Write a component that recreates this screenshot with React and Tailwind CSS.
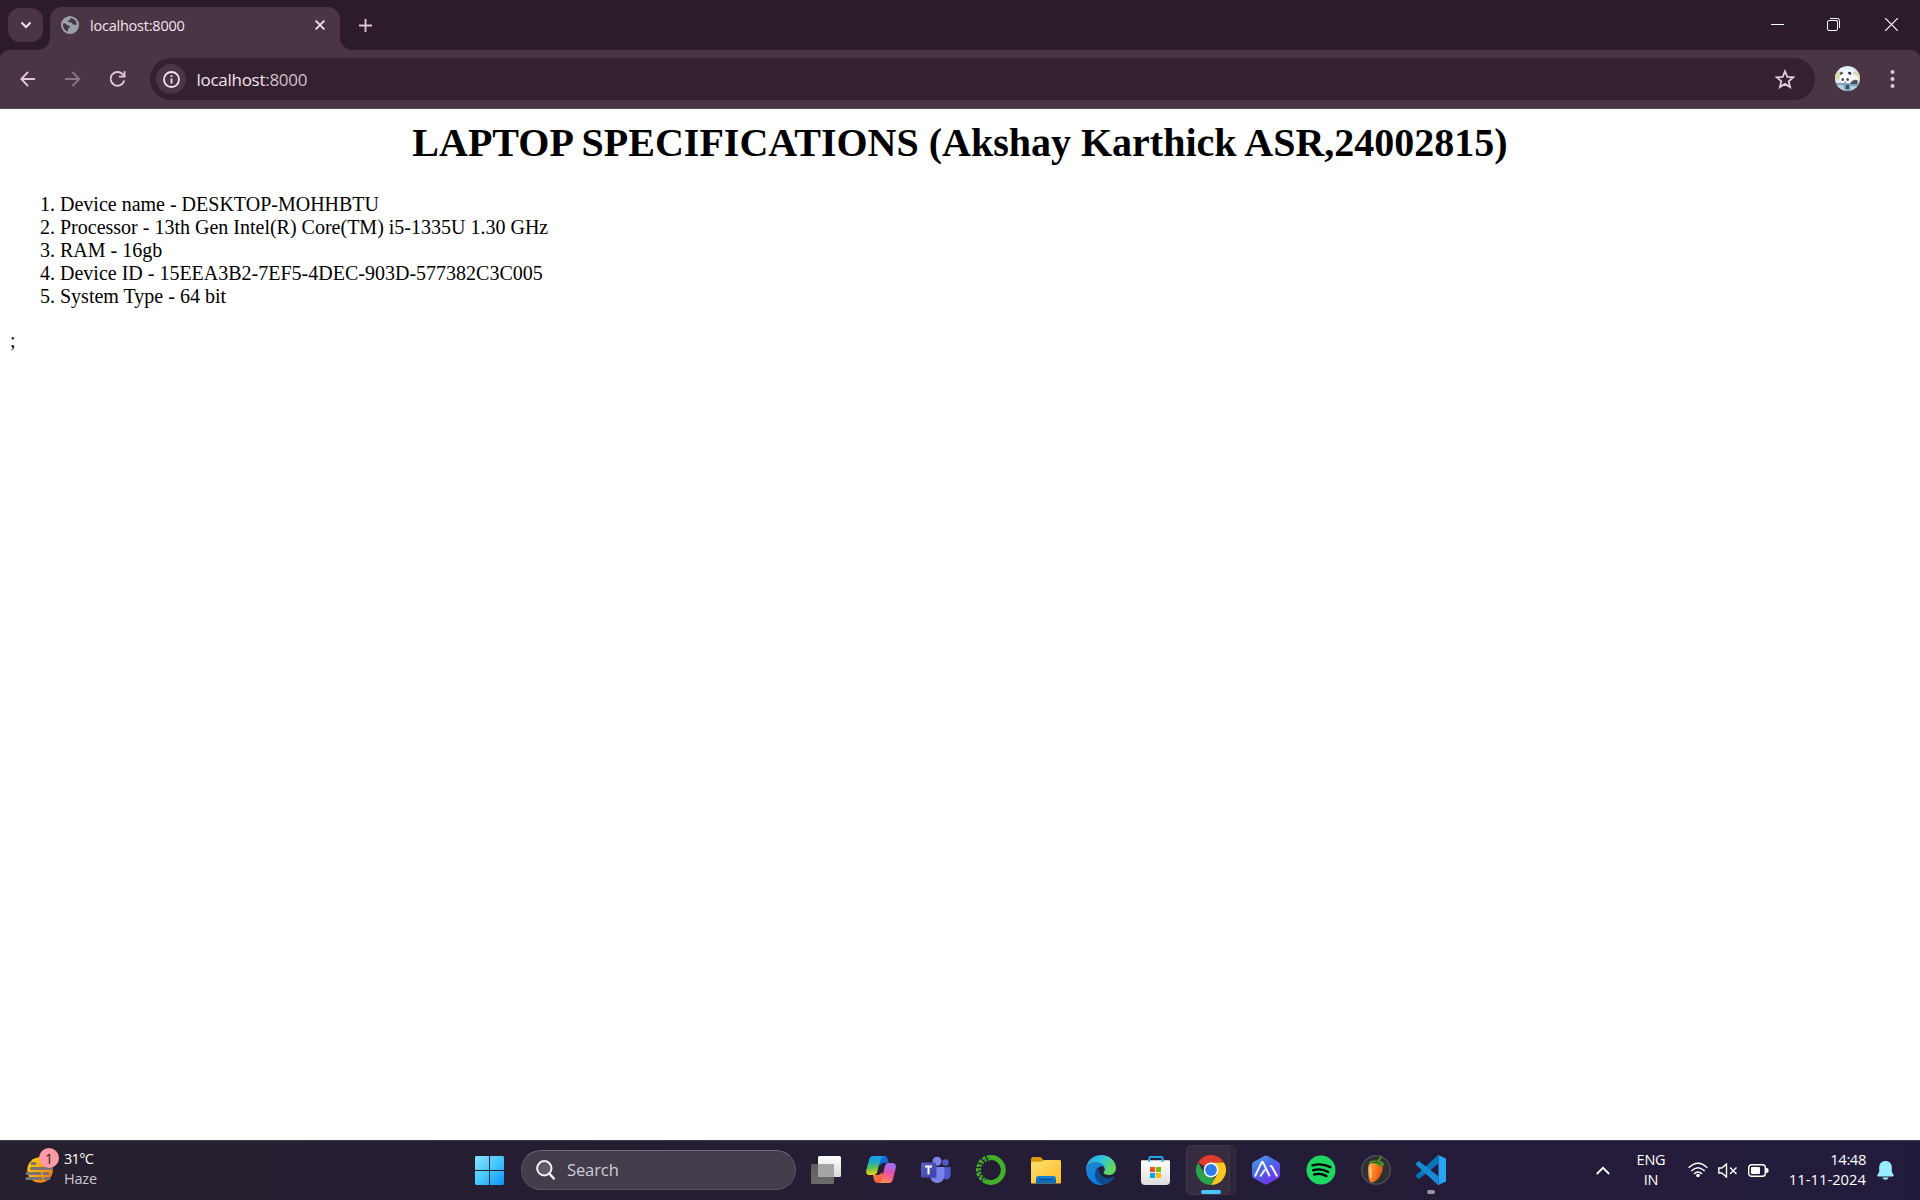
import React from "react";

const ui = "font-['Open_Sans','Noto_Sans',sans-serif]";

function Globe() {
  return (
    <svg width="18" height="18" viewBox="0 0 18 18">
      <circle cx="9" cy="9" r="8.8" fill="#9aa0a6" />
      <path d="M1.8 7.2C4 7 5 7.6 5.6 8.8c.7 1.2 2.4.6 3 1.5.5 1-.1 1.6-1 2-.8.4-.6 1.500-.7 3.600C4 15.300 1.900 12.500 1.800 9zM9.700 1.900c-.3 1-.1 1.500-1.100 2-.9.500-1.700.6-1.500 1.700.2 1 1.700.8 2.700.9 1.500.2 1.400 1.800 2.600 2.200 1.200.3 2.200-.1 3.700-.2C16 5 13.500 2.300 9.700 1.900z" fill="#4a3545" />
      <circle cx="9" cy="9" r="8" fill="none" stroke="#9aa0a6" strokeWidth="1.7" />
    </svg>
  );
}

function TabStrip() {
  return (
    <div className="flex h-[50px] bg-[#2c1b29]">
      <button className="ml-2 mt-2 flex h-[34px] w-[35px] items-center justify-center rounded-[12px] bg-[#4a3545]">
        <svg width="12" height="8" viewBox="0 0 12 8" fill="none" stroke="#f3e3ef" strokeWidth="2"><path d="M1.500 1.500 6 6l4.500-4.500" /></svg>
      </button>
      <div className="flex w-[7px] flex-col justify-end">
        <svg className="-ml-[6px] w-[13px]" width="13" height="13" viewBox="0 0 13 13"><path d="M13 0A13 13 0 0 1 0 13h13z" fill="#4a3545" /></svg>
      </div>
      <div className="mt-[7px] flex h-[43px] w-[290px] items-center rounded-t-[12px] bg-[#4a3545] pb-[7px] pl-[11px] pr-[15px]">
        <Globe />
        <span className="ml-[11px] flex-1 pt-[2px] text-[14.5px] leading-5 tracking-[-0.22px] text-[#f3e3ef]">localhost:8000</span>
        <svg width="10" height="10" viewBox="0 0 10 10" stroke="#f3e3ef" strokeWidth="1.800"><path d="m.6.6 8.800 8.800M9.400.6.6 9.400" /></svg>
      </div>
      <div className="flex w-[19px] flex-col justify-end">
        <svg width="13" height="13" viewBox="0 0 13 13"><path d="M0 0A13 13 0 0 0 13 13H0z" fill="#4a3545" /></svg>
      </div>
      <svg className="mt-[19px]" width="13" height="13" viewBox="0 0 13 13" stroke="#e3c6dc" strokeWidth="1.800"><path d="M6.500 0v13M0 6.500h13" /></svg>
      <div className="flex-1" />
      <div className="mr-[22px] flex h-[49px] items-center gap-[43px]">
        <svg width="13" height="14" viewBox="0 0 13 14"><path d="M0 7h13v1H0z" transform="translate(0 -1)" fill="#fff" /></svg>
        <svg width="13" height="13" viewBox="0 0 13 13" fill="none" stroke="#fff"><path d="M3 .5h7.500a2 2 0 0 1 2 2V10" /><path d="M3 2.500h7.500V10" stroke="#9a8d98" /><rect x=".5" y="2.500" width="10" height="10" rx="1.500" /></svg>
        <svg className="ml-[2px]" width="13" height="13" viewBox="0 0 13 13" stroke="#fff" strokeWidth="1.200"><path d="m0 0 13 13M13 0 0 13" /></svg>
      </div>
    </div>
  );
}

function Panda() {
  return (
    <svg width="25" height="25" viewBox="0 0 25 25">
      <defs><clipPath id="av"><circle cx="12.500" cy="12.500" r="12.500" /></clipPath></defs>
      <g clipPath="url(#av)">
        <path d="M0 0h25v25H0z" fill="#dcecf3" />
        <path d="M0 6h8l-3 7H0zM18 5h7v9h-6z" fill="#dcdba8" />
        <path d="M3 2c4-1 9 2 13 1l4 3-9 2z" fill="#f1f8fb" />
        <path d="M0 17h25v8H0z" fill="#7fa3ba" />
        <path d="M0 19h8l2 6H2zM15 20h10l-3 4h-6z" fill="#b5d3e0" />
        <ellipse cx="17" cy="13" rx="6.500" ry="5" fill="#f3f4f6" />
        <path d="M16 16q4-4 7-1l-1 3h-7z" fill="#4b5363" />
        <circle cx="6.500" cy="7.500" r="1.500" fill="#3a3f4d" /><circle cx="14.500" cy="7.500" r="1.700" fill="#2b303e" />
        <ellipse cx="10.500" cy="12" rx="5.800" ry="5" fill="#fbfbfc" />
        <ellipse cx="7.700" cy="13.500" rx="1.200" ry="1.600" fill="#3a3f4d" /><ellipse cx="12.700" cy="13.500" rx="1.200" ry="1.600" fill="#3a3f4d" />
        <path d="M9.500 15.500h1.500v1H9.500zM11 19h3v4h-3z" fill="#3f4a5e" />
      </g>
    </svg>
  );
}

function Toolbar() {
  return (
    <div className="h-[59px] bg-[#2c1b29]">
      <div className="flex h-[59px] items-start rounded-t-[9px] border-b border-[#5d4a58] bg-[#4a3545]">
        <div className="flex h-[58px] w-[150px] items-center pl-5">
          <svg width="16" height="16" viewBox="0 0 16 16" fill="none" stroke="#e3c6dc" strokeWidth="1.800"><path d="M15 8H1.500M8 1 1.200 8 8 15" /></svg>
          <svg className="ml-[29px]" width="16" height="16" viewBox="0 0 16 16" fill="none" stroke="#8b7485" strokeWidth="1.800"><path d="M0 8h14M7.500 1l6.800 7-6.800 7" /></svg>
          <svg className="ml-[29px]" width="16" height="16" viewBox="0 0 16 16" fill="none" stroke="#e3c6dc" strokeWidth="1.900"><path d="M14.200 9.600A6.900 6.900 0 1 1 12.900 3.500L14.400 5" /><path d="M14.500.3v5.300H9" /></svg>
        </div>
        <div className="mt-2 flex h-[42px] w-[1665px] items-center rounded-full bg-[#33212f] pl-[6px] pr-5">
          <div className="flex h-[30px] w-[30px] items-center justify-center rounded-full bg-[#4a3545]">
            <svg width="17" height="17" viewBox="0 0 17 17" fill="none" stroke="#f3e3ef" strokeWidth="1.800"><circle cx="8.500" cy="8.500" r="7.500" /><path d="M8.500 7.500v5M8.500 4.300v1.800" /></svg>
          </div>
          <span className="ml-[10.500px] flex-1 pt-[2px] text-[17px] leading-6 tracking-[-0.28px] text-[#f3e3ef]">localhost<span className="text-[#d3bfce]">:8000</span></span>
          <svg width="20" height="20" viewBox="0 0 20 20" fill="none" stroke="#e0cddb" strokeWidth="1.800"><path d="m10 2.300 2.300 5.500 5.900.5-4.500 3.900 1.400 5.800-5.100-3.100-5.100 3.100 1.400-5.800-4.500-3.900 5.900-.5z" /></svg>
        </div>
        <div className="ml-[20px] mt-[16px]"><Panda /></div>
        <svg className="ml-[30px] mt-5" width="5" height="18" viewBox="0 0 5 18" fill="#e3c6dc"><circle cx="2.500" cy="2" r="2" /><circle cx="2.500" cy="9" r="2" /><circle cx="2.500" cy="16" r="2" /></svg>
      </div>
    </div>
  );
}

const specs = [
  "Device name - DESKTOP-MOHHBTU",
  "Processor - 13th Gen Intel(R) Core(TM) i5-1335U 1.30 GHz",
  "RAM - 16gb",
  "Device ID - 15EEA3B2-7EF5-4DEC-903D-577382C3C005",
  "System Type - 64 bit",
];

function Page() {
  return (
    <main className="flex-1 bg-white px-[10px] pt-[11px] font-['Liberation_Serif',serif] text-[20px] leading-[23px] text-black">
      <h1 className="text-center text-[40px] font-bold leading-[46px]">LAPTOP SPECIFICATIONS (Akshay Karthick ASR,24002815)</h1>
      <ol className="mt-[27px] list-decimal pl-[50px]">
        {specs.map((s) => <li key={s}>{s}</li>)}
      </ol>
      <p className="mt-[21px]">;</p>
    </main>
  );
}

function Icon({ children }) {
  return <svg width="30" height="30" viewBox="0 0 30 30" overflow="visible">{children}</svg>;
}

function Grad({ id, stops, x2 = 1, y2 = 1 }) {
  return (
    <linearGradient id={id} x1="0" y1="0" x2={x2} y2={y2}>
      {stops.map((c, i) => <stop key={i} offset={i / (stops.length - 1)} stopColor={c} />)}
    </linearGradient>
  );
}

const TaskView = () => (
  <Icon>
    <defs><Grad id="tv" x2={0} stops={["#ffffff", "#d8d8d8"]} /><Grad id="tv2" x2={0} stops={["#5d5d5d", "#6b6b6b"]} /></defs>
    <rect x="0" y="9" width="23" height="20" rx="1.500" fill="url(#tv2)" />
    <rect x="7" y="1" width="23" height="21" rx="1.500" fill="url(#tv)" />
    <path d="M7 9h16v13H8.500A1.500 1.500 0 0 1 7 20.500z" fill="#a5a5a5" />
  </Icon>
);

const Copilot = () => (
  <Icon>
    <defs>
      <Grad id="cp1" x2={0.1} stops={["#1a9cf0", "#18a9c8", "#62bd54", "#f3d115"]} />
      <Grad id="cp2" x2={-0.2} stops={["#a66bf0", "#e052ab", "#fa6a70", "#ffa34d"]} />
      <Grad id="cp3" stops={["#1397f0", "#1a48c7"]} />
      <Grad id="cp4" stops={["#ff8a50", "#e8402d"]} />
    </defs>
    <path d="M8 1h10c2.500 0 3.400 1.500 4 4l.7 3h-5.200c-2 0-3 1-3.500 3z" fill="url(#cp3)" />
    <path d="M22 28H12c-2.500 0-3.500-1.500-4.200-4L7 20h5c2 0 3-1 3.600-3z" fill="url(#cp4)" />
    <path d="M7.500 1H17c-1.500.5-2.100 2-2.700 4l-3.100 12c-.7 2.200-1.700 3-4 3H3.500C.4 20-.3 17.500.4 14.500L3 5c.8-3 2-4 4.500-4z" fill="url(#cp1)" />
    <path d="M22.500 28H13c1.500-.5 2.200-2 2.800-4l3-12.500C19.500 9 20.500 8 22.800 8h3.700c3.200 0 3.800 2.800 3.200 5.500L27 24c-.8 3-2 4-4.500 4z" fill="url(#cp2)" />
  </Icon>
);

const Teams = () => (
  <Icon>
    <circle cx="24.500" cy="7.500" r="3.200" fill="#5059c9" />
    <path d="M21 12h7.500c.8 0 1.200.5 1.200 1.200v6.300c0 7-8.700 6-8.700 0z" fill="#5059c9" />
    <circle cx="16" cy="6.300" r="4.500" fill="#7b83eb" />
    <path d="M9 12h13c.9 0 1.400.6 1.400 1.400V20c0 10.500-14.400 10.500-14.400 0z" fill="#7b83eb" />
    <path d="M10 12h6v9.500a2 2 0 0 1-2 2h-3.700L9 20z" fill="#626bcf" />
    <defs><Grad id="tm" stops={["#5a62c3", "#3940ab"]} /></defs>
    <rect x="0" y="7.500" width="15" height="15" rx="1.500" fill="url(#tm)" />
    <path d="M4 10.500h7V12.500H8.500v7h-2v-7H4z" fill="#fff" />
  </Icon>
);

const Anaconda = () => (
  <Icon>
    <path d="M14 2.600a12.400 12.400 0 1 1-5 23.300" fill="none" stroke="#43b02a" strokeWidth="5" />
    <path d="M14 1.300A13.500 13.500 0 0 0 9 27" fill="none" stroke="#43b02a" strokeWidth="2.600" strokeDasharray="3.400 1.300" />
    <path d="M14 4.200A11 11 0 0 0 9 24.500" fill="none" stroke="#43b02a" strokeWidth="2.600" strokeDasharray="2 1.600" />
  </Icon>
);

const Explorer = () => (
  <Icon>
    <defs><Grad id="fo" stops={["#ffdf70", "#fbbd27"]} /><Grad id="fb" x2={0} stops={["#1683d8", "#0a65b8"]} /></defs>
    <path d="M0 4.500A2.500 2.500 0 0 1 2.500 2h7l3.500 3.500h15V10H0z" fill="#dd9a07" />
    <path d="M0 8.500c0-1 .7-1.800 1.500-1.800H10L13.500 5H28.500c.9 0 1.500.6 1.500 1.500v21c0 .6-.5 1-1 1H1c-.6 0-1-.4-1-1z" fill="url(#fo)" />
    <path d="M5 28.500v-5A2.500 2.500 0 0 1 7.500 21h15a2.500 2.500 0 0 1 2.500 2.500v5z" fill="url(#fb)" />
    <path d="M8 24.500h14" stroke="#084c91" strokeWidth="1.300" />
  </Icon>
);

const Edge = () => (
  <Icon>
    <defs>
      <Grad id="e1" x2={1} y2={0.5} stops={["#259fdf", "#34c4dc", "#62d65b"]} />
      <Grad id="e2" x2={0.3} stops={["#2186cf", "#0b7ddd"]} />
    </defs>
    <path d="M.3 12.500C1.300 5 7.500 0 15 0c8.500 0 15 6 15 13 0 4.300-3 7-7 7-3.500 0-5.500-1.200-5.500-2.500 0-.8 1.300-1.400 1.300-3.300 0-2.500-2.600-5.200-7-5.200C6.500 9 1.500 11.500.3 15z" fill="url(#e1)" />
    <path d="M.2 13C2 8.500 6 7 9.500 7c4.500 0 7.500 2 8.700 4.500C13.500 10 10 14 10 18.500c0 5 3.500 10 7.500 11.300C8 31.300-.8 24 .2 13z" fill="url(#e2)" />
    <path d="M11.800 12.500c-4.300 3-4.300 14.500 5.700 17.300 4.500-.6 8.500-3.500 10.600-7.300.4-.7-.2-1-.8-.7-6.300 3.500-13.800.2-15.500-9.300z" fill="#114a8b" />
  </Icon>
);

const Store = () => (
  <Icon>
    <defs><Grad id="st" x2={0} stops={["#ffffff", "#dcdcdc"]} /></defs>
    <path d="M8.200 7V3.200c0-.8.6-1.200 1.300-1.200h10.800c.8 0 1.300.4 1.300 1.200V7" fill="none" stroke="#20a7e3" strokeWidth="1.800" />
    <path d="M0 6.500c0-.8.5-1.300 1.300-1.300h26.400c.8 0 1.300.5 1.300 1.300V26a4 4 0 0 1-4 4H4a4 4 0 0 1-4-4z" fill="url(#st)" />
    <path d="M8.200 7V3.500M21.600 7V3.500" stroke="#20a7e3" strokeWidth="1.800" />
    <path d="M9 12h5v5H9z" fill="#f25022" /><path d="M15 12h5v5h-5z" fill="#7fba00" />
    <path d="M9 18h5v5H9z" fill="#00a4ef" /><path d="M15 18h5v5h-5z" fill="#ffb900" />
  </Icon>
);

const Chrome = () => (
  <Icon>
    <path d="M15 15 2 7.500A15 15 0 0 1 28 7.500H15z" fill="#e33b2e" />
    <path d="M15 7.500h13A15 15 0 0 1 15 30l6.500-11.300z" fill="#fdc723" />
    <path d="M2 7.500 8.500 18.800 15 22.500h4.200L15 30A15 15 0 0 1 2 7.500z" fill="#2ba24c" />
    <circle cx="15" cy="15" r="7.400" fill="#fff" /><circle cx="15" cy="15" r="5.900" fill="#2f7bea" />
  </Icon>
);

const Arena = () => (
  <Icon>
    <defs><Grad id="ar" x2={0.6} stops={["#50a8e0", "#4a66ea", "#6f35e8"]} /></defs>
    <path d="M13.300.9q1.700-1 3.400 0l10.500 5.800Q29 7.700 29 9.700v10.600q0 2-1.800 3L16.700 29.100q-1.700 1-3.400 0L2.800 23.300q-1.800-1-1.800-3V9.700q0-2 1.800-3z" fill="url(#ar)" />
    <path d="M4.300 20.700 10.500 7.500q.8-1.300 1.600 0l6.200 13M9.700 20.700l3.800-5.500M19.600 11.200q.7-.6 1.300.5L25.800 20.700" fill="none" stroke="#f6f4ff" strokeWidth="2" strokeLinecap="round" />
  </Icon>
);

const Spotify = () => (
  <Icon>
    <circle cx="15" cy="15" r="14.500" fill="#1ed760" />
    <path d="M6.500 10.300q9.500-2.600 17.800 1.800M7.200 15.200q8-2.200 15 1.800M8.200 19.500q6.700-1.700 12.200 1.600" fill="none" stroke="#000" strokeWidth="2.400" strokeLinecap="round" />
  </Icon>
);

const FruityLoops = () => (
  <Icon>
    <defs><Grad id="fl" x2={1} y2={0.4} stops={["#ffb45c", "#ff8127", "#e0500d"]} /></defs>
    <circle cx="15" cy="15" r="14.300" fill="#2e3133" stroke="#4b4e51" strokeWidth="1.400" />
    <path d="M7.300 12c.2-3.500 3-5 7-4.500 4.700.4 7.700 2.200 7.500 5.500-.3 5.500-5 13.500-10.800 14.500-3.500.3-4.200-9-3.700-15.500z" fill="url(#fl)" />
    <path d="M9.500 12.500c0 4-.2 7 .8 10.500" stroke="#ffd39b" strokeWidth="1.500" fill="none" />
    <path d="M7.300 9.500c.9-3 4-4.700 8.500-3.500L20 .8l1.300.7-2.800 4.700c3 0 5 2 4.700 5-2-1.700-3.200-.7-4.200 1.300-1.500-2-3-2.500-4.300-3.500-2-.8-4.700-2-7.400.5z" fill="#4f9428" />
    <path d="m11 8 5-1 3.500 2" stroke="#254b17" fill="none" />
  </Icon>
);

const VSCode = () => (
  <Icon>
    <path d="M22 0 0 20.300c-.5.500-.5 1 0 1.500L2 23.500c.5.400 1 .3 1.500 0L22.500 8.700z" fill="#0b73b9" />
    <path d="M22 30 0 9.700c-.5-.5-.5-1 0-1.500L2 6.500c.5-.4 1-.3 1.500 0l19 14.800z" fill="#168bd2" />
    <path d="M21.500.2 22.300 0 30 3.500v23L22.300 30l-.8-.2c.7 0 1-.5 1-1.300v-27c0-.8-.4-1.300-1-1.300z" fill="#26a4f2" />
  </Icon>
);

const apps = [
  ["Task view", TaskView], ["Copilot", Copilot], ["Teams", Teams], ["Anaconda", Anaconda], ["Explorer", Explorer], ["Edge", Edge],
  ["Store", Store], ["Chrome", Chrome], ["Arena", Arena], ["Spotify", Spotify], ["FL Studio", FruityLoops], ["VS Code", VSCode],
];

function AppButton({ name, Glyph }) {
  if (name === "Chrome") {
    return (
      <div className="relative mr-px flex h-[50px] w-[54px] items-center justify-center">
        <div className="absolute left-[3px] top-0 h-[50px] w-[49px] rounded-[5px] border border-[#3a3145] bg-[#2e2539]" />
        <div className="absolute left-[2px] top-0 h-[50px] w-[44px] rounded-[5px] border border-[#40384a] bg-[#352c40]" />
        <div className="relative flex"><Glyph /></div>
        <div className="absolute bottom-[1px] left-[17px] h-1 w-5 rounded-full bg-[#4cc2ff]" />
      </div>
    );
  }
  return (
    <div className="relative mr-px flex h-[50px] w-[54px] items-center justify-center">
      <Glyph />
      {name === "VS Code" && <div className="absolute bottom-[1px] left-[23px] h-1 w-2 rounded-full bg-[#9c96a3]" />}
    </div>
  );
}

function Taskbar() {
  return (
    <footer className="flex h-[60px] items-center border-t border-[#443f50] bg-linear-to-r from-[#261f2e] via-[#241d35] to-[#231b3b] pb-px text-white">
      <div className="flex w-[475px] items-center pl-[25px]">
        <div className="relative h-[36px] w-[34px]">
          <svg className="mt-[2px]" width="30" height="31" viewBox="0 0 30 31">
            <defs><Grad id="sun" stops={["#ffd400", "#f9a516", "#ee6b16"]} /></defs>
            <circle cx="15" cy="16" r="12.800" fill="url(#sun)" />
            <path d="M7 9.500h3M6.500 14.500h20M2 19.500h13M19 19.500h4M2 24.500h14M20 24.500h4" stroke="#777579" strokeWidth="3" strokeLinecap="round" />
          </svg>
          <div className="absolute -top-[4px] left-[14px] flex h-5 w-5 items-center justify-center rounded-full bg-[#ff99a4] text-[14px] text-[#2a2028]">1</div>
        </div>
        <div className="ml-[5px] pb-[2px] text-[14.500px] leading-5">
          <div className="tracking-[-0.7px]">31°C</div>
          <div className="tracking-[-0.2px] text-[#cbc8ce]">Haze</div>
        </div>
      </div>
      <svg width="29" height="29" viewBox="0 0 29 29">
        <defs><linearGradient id="win" gradientUnits="userSpaceOnUse" x1="0" y1="0" x2="29" y2="29"><stop stopColor="#8ce0ff" /><stop offset=".5" stopColor="#45c8ff" /><stop offset="1" stopColor="#0c93fb" /></linearGradient></defs>
        <path d="M1 0h13v14H0V1zM15 0h13l1 1v13H15zM0 15h14v14H1l-1-1zM15 15h14v13l-1 1H15z" fill="url(#win)" />
      </svg>
      <div className="ml-[17px] mr-[3px] flex h-10 w-[275px] items-center rounded-full border border-[#5a5360] border-t-[#75697a] bg-[#423c4b] pl-[14px]">
        <svg width="19" height="20" viewBox="0 0 19 20" fill="none" stroke="#f2f0f3" strokeWidth="2"><circle cx="8.300" cy="8.300" r="7.200" fill="#5f5a67" /><path d="m13.300 13.500 4.500 5" strokeWidth="2.500" strokeLinecap="round" /></svg>
        <span className="ml-[12px] pt-px text-[16.500px] tracking-[-0.1px] text-[#d2ced5]">Search</span>
      </div>
      {apps.map(([name, Glyph]) => <AppButton key={name} name={name} Glyph={Glyph} />)}
      <div className="flex flex-1 items-center justify-end pr-[26px]">
        <svg width="14" height="9" viewBox="0 0 14 9" fill="none" stroke="#fff" strokeWidth="1.800"><path d="m.8 8 6.200-6.200L13.200 8" /></svg>
        <div className="ml-[21px] w-[40px] pb-px text-center text-[14.500px] leading-5 tracking-[-0.2px]">ENG<br />IN</div>
        <svg className="ml-[17px]" width="20" height="16" viewBox="0 0 20 16" fill="none" stroke="#fff" strokeWidth="1.500"><path d="M.7 5.700q9.300-9 18.600 0M3.300 9q6.700-6.500 13.400 0M6 12q4-4 8 0" /><circle cx="10" cy="13.500" r="1.800" fill="#fff" stroke="none" /></svg>
        <svg className="ml-[10px]" width="20" height="15" viewBox="0 0 20 15" fill="none" stroke="#fff" strokeWidth="1.400"><path d="M.8 5h3L8.500.9v13.200L3.800 10h-3zM12 4.500l6.500 6.500M18.500 4.500 12 11" /></svg>
        <svg className="ml-[10px]" width="21" height="13" viewBox="0 0 21 13"><rect x=".7" y=".7" width="16.600" height="11.600" rx="2.800" fill="none" stroke="#fff" strokeWidth="1.400" /><rect x="3" y="3" width="9" height="7" rx="1" fill="#fff" /><path d="M18 4h1l1.500 1v3L19 9h-1z" fill="#fff" /></svg>
        <div className="ml-[18px] w-[79px] whitespace-nowrap pb-[3px] text-right text-[14.800px] leading-5"><span className="tracking-[-0.4px]">14:48</span><br />11-11-2024</div>
        <svg className="ml-[11px]" width="17" height="21" viewBox="0 0 17 21" fill="#99ebff"><path d="M8.500 1c3.700 0 6.300 2.700 6.300 6.300v4.500l1.900 3.500c.3.600 0 1.200-.7 1.200H1c-.7 0-1-.6-.7-1.200l1.900-3.500V7.300C2.200 3.700 4.800 1 8.500 1zM5.500 17.500h6c-.5 3-5.500 3-6 0z" /></svg>
      </div>
    </footer>
  );
}

export default function App() {
  return (
    <div className={`flex h-[1200px] w-[1920px] flex-col overflow-hidden bg-white ${ui}`}>
      <TabStrip />
      <Toolbar />
      <Page />
      <Taskbar />
    </div>
  );
}
